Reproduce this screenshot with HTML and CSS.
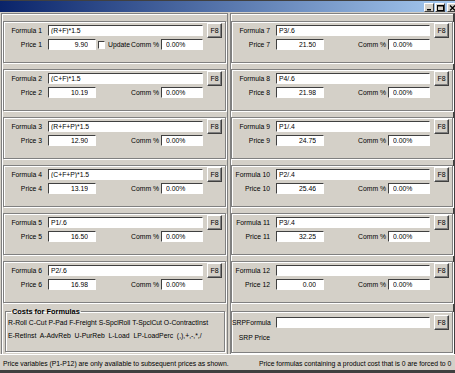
FILE: index.html
```html
<!DOCTYPE html>
<html lang="en">
<head>
    <meta charset="UTF-8">
    <title>Price Formulas</title>
    <link rel="stylesheet" href="styles.css">
</head>
<body>
    <div class="window">
        <div class="titlebar">
            <span class="cap-btn"><svg width="7" height="6" viewBox="0 0 7 6"><rect x="1" y="4" width="4" height="1.5" fill="#000"/></svg></span>
            <span class="cap-btn"><svg width="7" height="6" viewBox="0 0 7 6"><rect x="0.5" y="0.5" width="6" height="5" fill="none" stroke="#000"/><rect x="0.5" y="0.5" width="6" height="1" fill="#000"/></svg></span>
            <span class="cap-btn cap-close"><svg width="7" height="6" viewBox="0 0 7 6"><path d="M1 0.5 L6 5.5 M6 0.5 L1 5.5" stroke="#000" stroke-width="1.3"/></svg></span>
        </div>
        <div class="client">
            <div class="columns">
                <div class="column">
                    <div class="panel">
                        <div class="row">
                            <label class="lbl">Formula 1</label>
                            <input class="formula" type="text" value="(R+F)*1.5">
                            <button class="btn-f8">F8</button>
                        </div>
                        <div class="row row-price">
                            <label class="lbl">Price 1</label>
                            <div class="fields">
                                <input class="price" type="text" value="9.90">
                                <input class="check" type="checkbox">
                                <span class="check-text">Update</span>
                                <span class="comm-lbl">Comm %</span>
                                <input class="comm" type="text" value="0.00%">
                            </div>
                        </div>
                    </div>
                    <div class="panel">
                        <div class="row">
                            <label class="lbl">Formula 2</label>
                            <input class="formula" type="text" value="(C+F)*1.5">
                            <button class="btn-f8">F8</button>
                        </div>
                        <div class="row row-price">
                            <label class="lbl">Price 2</label>
                            <div class="fields">
                                <input class="price" type="text" value="10.19">
                                <span class="comm-lbl">Comm %</span>
                                <input class="comm" type="text" value="0.00%">
                            </div>
                        </div>
                    </div>
                    <div class="panel">
                        <div class="row">
                            <label class="lbl">Formula 3</label>
                            <input class="formula" type="text" value="(R+F+P)*1.5">
                            <button class="btn-f8">F8</button>
                        </div>
                        <div class="row row-price">
                            <label class="lbl">Price 3</label>
                            <div class="fields">
                                <input class="price" type="text" value="12.90">
                                <span class="comm-lbl">Comm %</span>
                                <input class="comm" type="text" value="0.00%">
                            </div>
                        </div>
                    </div>
                    <div class="panel">
                        <div class="row">
                            <label class="lbl">Formula 4</label>
                            <input class="formula" type="text" value="(C+F+P)*1.5">
                            <button class="btn-f8">F8</button>
                        </div>
                        <div class="row row-price">
                            <label class="lbl">Price 4</label>
                            <div class="fields">
                                <input class="price" type="text" value="13.19">
                                <span class="comm-lbl">Comm %</span>
                                <input class="comm" type="text" value="0.00%">
                            </div>
                        </div>
                    </div>
                    <div class="panel">
                        <div class="row">
                            <label class="lbl">Formula 5</label>
                            <input class="formula" type="text" value="P1/.6">
                            <button class="btn-f8">F8</button>
                        </div>
                        <div class="row row-price">
                            <label class="lbl">Price 5</label>
                            <div class="fields">
                                <input class="price" type="text" value="16.50">
                                <span class="comm-lbl">Comm %</span>
                                <input class="comm" type="text" value="0.00%">
                            </div>
                        </div>
                    </div>
                    <div class="panel">
                        <div class="row">
                            <label class="lbl">Formula 6</label>
                            <input class="formula" type="text" value="P2/.6">
                            <button class="btn-f8">F8</button>
                        </div>
                        <div class="row row-price">
                            <label class="lbl">Price 6</label>
                            <div class="fields">
                                <input class="price" type="text" value="16.98">
                                <span class="comm-lbl">Comm %</span>
                                <input class="comm" type="text" value="0.00%">
                            </div>
                        </div>
                    </div>
                    <fieldset class="costs">
                        <legend>Costs for Formulas</legend>
                        <div class="costs-line">R-Roll C-Cut P-Pad F-Freight S-SpclRoll T-SpclCut O-ContractInst</div>
                        <div class="costs-line">E-RetInst&nbsp; A-AdvReb&nbsp; U-PurReb&nbsp; L-Load&nbsp; LP-LoadPerc&nbsp; (,),+,-,*,/</div>
                    </fieldset>
                </div>

                <div class="column column-right">
                    <div class="panel">
                        <div class="row">
                            <label class="lbl">Formula 7</label>
                            <input class="formula" type="text" value="P3/.6">
                            <button class="btn-f8">F8</button>
                        </div>
                        <div class="row row-price">
                            <label class="lbl">Price 7</label>
                            <div class="fields">
                                <input class="price" type="text" value="21.50">
                                <span class="comm-lbl">Comm %</span>
                                <input class="comm" type="text" value="0.00%">
                            </div>
                        </div>
                    </div>
                    <div class="panel">
                        <div class="row">
                            <label class="lbl">Formula 8</label>
                            <input class="formula" type="text" value="P4/.6">
                            <button class="btn-f8">F8</button>
                        </div>
                        <div class="row row-price">
                            <label class="lbl">Price 8</label>
                            <div class="fields">
                                <input class="price" type="text" value="21.98">
                                <span class="comm-lbl">Comm %</span>
                                <input class="comm" type="text" value="0.00%">
                            </div>
                        </div>
                    </div>
                    <div class="panel">
                        <div class="row">
                            <label class="lbl">Formula 9</label>
                            <input class="formula" type="text" value="P1/.4">
                            <button class="btn-f8">F8</button>
                        </div>
                        <div class="row row-price">
                            <label class="lbl">Price 9</label>
                            <div class="fields">
                                <input class="price" type="text" value="24.75">
                                <span class="comm-lbl">Comm %</span>
                                <input class="comm" type="text" value="0.00%">
                            </div>
                        </div>
                    </div>
                    <div class="panel">
                        <div class="row">
                            <label class="lbl">Formula 10</label>
                            <input class="formula" type="text" value="P2/.4">
                            <button class="btn-f8">F8</button>
                        </div>
                        <div class="row row-price">
                            <label class="lbl">Price 10</label>
                            <div class="fields">
                                <input class="price" type="text" value="25.46">
                                <span class="comm-lbl">Comm %</span>
                                <input class="comm" type="text" value="0.00%">
                            </div>
                        </div>
                    </div>
                    <div class="panel">
                        <div class="row">
                            <label class="lbl">Formula 11</label>
                            <input class="formula" type="text" value="P3/.4">
                            <button class="btn-f8">F8</button>
                        </div>
                        <div class="row row-price">
                            <label class="lbl">Price 11</label>
                            <div class="fields">
                                <input class="price" type="text" value="32.25">
                                <span class="comm-lbl">Comm %</span>
                                <input class="comm" type="text" value="0.00%">
                            </div>
                        </div>
                    </div>
                    <div class="panel">
                        <div class="row">
                            <label class="lbl">Formula 12</label>
                            <input class="formula" type="text" value="">
                            <button class="btn-f8">F8</button>
                        </div>
                        <div class="row row-price">
                            <label class="lbl">Price 12</label>
                            <div class="fields">
                                <input class="price" type="text" value="0.00">
                                <span class="comm-lbl">Comm %</span>
                                <input class="comm" type="text" value="0.00%">
                            </div>
                        </div>
                    </div>
                    <div class="panel panel-srp">
                        <div class="row">
                            <label class="lbl">SRPFormula</label>
                            <input class="formula" type="text" value="">
                            <button class="btn-f8">F8</button>
                        </div>
                        <div class="row row-srp">
                            <label class="lbl">SRP Price</label>
                        </div>
                    </div>
                </div>
            </div>
            <div class="statusbar">
                <div class="status-left">Price variables (P1-P12) are only available to subsequent prices as shown.</div>
                <div class="status-right">Price formulas containing a product cost that is 0 are forced to 0</div>
            </div>
        </div>
    </div>
</body>
</html>
```

FILE: styles.css
```css
body {
    margin: 0;
    padding: 0;
    font-family: "Liberation Sans", Arial, sans-serif;
    font-size: 6.8px;
    color: #000;
}
.window {
    width: 455px;
    height: 373px;
    overflow: hidden;
    background-color: #d4d0c8;
    display: flex;
    flex-direction: column;
    box-sizing: border-box;
    border-bottom: 3px solid #404040;
}
.titlebar {
    height: 12px;
    flex: none;
    box-sizing: border-box;
    border-top: 1px solid #404040;
    padding-top: 2px;
    background: linear-gradient(to right, #0a246a, #a6caf0);
    display: flex;
    justify-content: flex-end;
}
.cap-btn {
    width: 10px;
    height: 9px;
    box-sizing: border-box;
    margin-left: 1px;
    background-color: #d4d0c8;
    border: 1px solid;
    border-color: #fff #404040 #404040 #fff;
    display: flex;
    align-items: center;
    justify-content: center;
}
.cap-close {
    margin-left: 2px;
    margin-right: -2px;
}
.client {
    flex: 1;
    display: flex;
    flex-direction: column;
    min-height: 0;
}
.columns {
    flex: 1;
    display: grid;
    grid-template-columns: 227px 1fr;
    column-gap: 2px;
    padding: 1px 0 0 1px;
    min-height: 0;
}
.column {
    border: 1px solid #808080;
    border-bottom: none;
    box-shadow: inset 1px 1px #fff;
    padding: 7px 1px 0 1px;
    display: flex;
    flex-direction: column;
    gap: 6px;
}
.column-right {
    border-right: 2px solid #404040;
    padding-right: 0;
    padding-left: 0;
}
.panel {
    height: 42px;
    flex: none;
    box-sizing: border-box;
    border: 1px solid #808080;
    box-shadow: inset 1px 1px #fff, 1px 1px #fff;
    padding: 1px 3px 0 0;
}
.panel-srp {
    margin-top: 2px;
    padding-top: 3px;
}
.row {
    display: flex;
    align-items: center;
    height: 15px;
}
.row-price {
    height: 11px;
    margin-top: 1px;
}
.row-srp {
    height: 11px;
    margin-top: 2px;
}
.lbl {
    width: 38px;
    margin-right: 6px;
    flex: none;
    text-align: right;
    white-space: nowrap;
}
input[type="text"] {
    height: 11px;
    box-sizing: border-box;
    margin: 0;
    padding: 0 2px;
    border: 1px solid;
    border-color: #404040 #fff #fff #404040;
    background-color: #fff;
    font-family: inherit;
    font-size: 6.8px;
    color: #000;
    outline: none;
}
.formula {
    flex: 1;
    min-width: 0;
}
.btn-f8 {
    width: 15px;
    height: 15px;
    flex: none;
    margin: 0 0 0 4px;
    padding: 0;
    box-sizing: border-box;
    background-color: #d4d0c8;
    border: 1px solid;
    border-color: #fff #404040 #404040 #fff;
    box-shadow: inset -1px -1px #808080;
    font-family: inherit;
    font-size: 7px;
    color: #000;
}
.fields {
    flex: 1;
    display: flex;
    align-items: center;
    margin-right: 19px;
}
.price {
    width: 48px;
    text-align: right;
    padding-right: 7px !important;
}
.check {
    appearance: none;
    width: 7px;
    height: 8px;
    margin: 0 0 0 2px;
    box-sizing: border-box;
    background-color: #fff;
    border: 1px solid;
    border-color: #404040 #fff #fff #404040;
}
.check-text {
    margin-left: 3px;
}
.comm-lbl {
    margin-left: auto;
    margin-right: 2px;
    white-space: nowrap;
}
.comm {
    width: 42px;
    padding-left: 4px !important;
}
.costs {
    margin: -2px 1px 0 2px;
    padding: 0 2px;
    flex: none;
    height: 45px;
    box-sizing: border-box;
    border: 1px solid #808080;
    box-shadow: inset 1px 1px #fff, 1px 1px #fff;
}
.costs legend {
    font-weight: bold;
    font-size: 7.4px;
    padding: 0 1px;
    margin-left: 3px;
}
.costs-line {
    height: 13px;
    line-height: 13px;
    white-space: nowrap;
    overflow: hidden;
}
.statusbar {
    height: 15px;
    flex: none;
    display: flex;
    align-items: stretch;
    border-top: 1px solid #fff;
    white-space: nowrap;
}
.status-left {
    width: 229px;
    flex: none;
    overflow: hidden;
    padding-left: 3px;
    box-sizing: border-box;
    line-height: 17px;
}
.status-right {
    flex: 1;
    overflow: hidden;
    padding-left: 30px;
    line-height: 17px;
}
```
